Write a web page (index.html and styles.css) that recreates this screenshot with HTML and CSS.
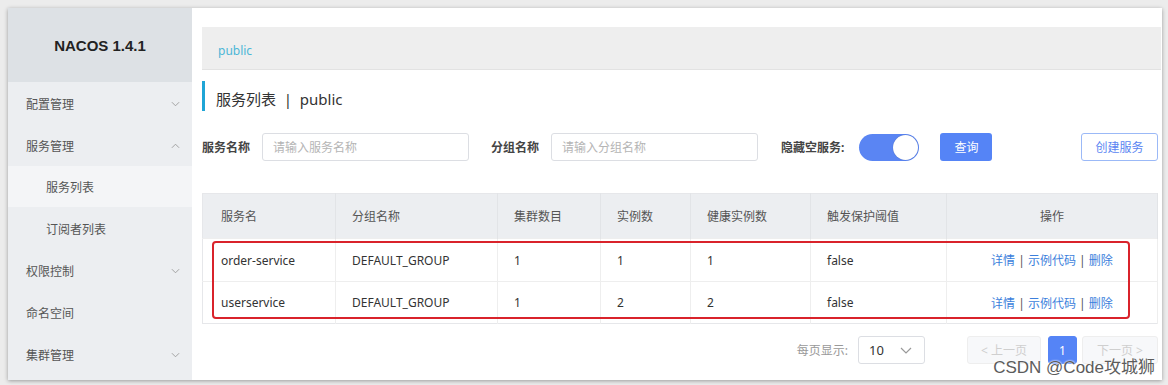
FILE: index.html
```html
<!DOCTYPE html>
<html lang="zh">
<head>
<meta charset="utf-8">
<title>NACOS</title>
<link rel="stylesheet" href="styles.css">
</head>
<body>
<div class="app">
  <aside class="sidebar">
    <div class="brand">NACOS 1.4.1</div>
    <ul class="menu">
      <li class="item"><span>配置管理</span><svg class="chev" viewBox="0 0 10 6"><path d="M1 1l4 4 4-4"/></svg></li>
      <li class="item"><span>服务管理</span><svg class="chev" viewBox="0 0 10 6"><path d="M1 5l4-4 4 4"/></svg></li>
      <li class="item sub active"><span>服务列表</span></li>
      <li class="item sub"><span>订阅者列表</span></li>
      <li class="item"><span>权限控制</span><svg class="chev" viewBox="0 0 10 6"><path d="M1 1l4 4 4-4"/></svg></li>
      <li class="item"><span>命名空间</span></li>
      <li class="item"><span>集群管理</span><svg class="chev" viewBox="0 0 10 6"><path d="M1 1l4 4 4-4"/></svg></li>
    </ul>
  </aside>
  <main class="main">
    <div class="crumb">public</div>
    <h1 class="title">服务列表&nbsp;&nbsp;|&nbsp;&nbsp;public</h1>
    <div class="form">
      <label class="lbl">服务名称</label>
      <div class="input">请输入服务名称</div>
      <label class="lbl lbl2">分组名称</label>
      <div class="input">请输入分组名称</div>
      <label class="lbl lbl3">隐藏空服务:</label>
      <div class="toggle"><span class="knob"></span></div>
      <button class="btn primary">查询</button>
      <span class="spacer"></span>
      <button class="btn outline">创建服务</button>
    </div>
    <div class="table-wrap">
      <table class="tbl">
        <colgroup>
          <col class="c1"><col class="c2"><col class="c3"><col class="c4"><col class="c5"><col class="c6"><col class="c7">
        </colgroup>
        <thead>
          <tr><th>服务名</th><th>分组名称</th><th>集群数目</th><th>实例数</th><th>健康实例数</th><th>触发保护阈值</th><th class="center">操作</th></tr>
        </thead>
        <tbody>
          <tr><td>order-service</td><td>DEFAULT_GROUP</td><td>1</td><td>1</td><td>1</td><td>false</td><td class="ops"><a>详情</a> | <a>示例代码</a> | <a>删除</a></td></tr>
          <tr><td>userservice</td><td>DEFAULT_GROUP</td><td>1</td><td>2</td><td>2</td><td>false</td><td class="ops"><a>详情</a> | <a>示例代码</a> | <a>删除</a></td></tr>
        </tbody>
      </table>
      <div class="highlight"></div>
    </div>
    <div class="pager">
      <span class="per">每页显示:</span>
      <div class="select"><span>10</span><svg class="schev" viewBox="0 0 12 7"><path d="M1 1l5 5 5-5"/></svg></div>
      <button class="pbtn disabled prev">&lt; 上一页</button>
      <button class="pbtn current">1</button>
      <button class="pbtn disabled next">下一页 &gt;</button>
    </div>
    <div class="watermark">CSDN @Code攻城狮</div>
  </main>
</div>
</body>
</html>
```
FILE: styles.css
```css
* { box-sizing: border-box; }
html, body { margin: 0; padding: 0; }
body {
  width: 1168px;
  height: 385px;
  background: #ececec;
  font-family: "Noto Sans", "Noto Sans CJK SC", sans-serif;
  font-size: 12px;
  color: #333;
  overflow: hidden;
}
.app {
  display: flex;
  margin: 8px 6px 0 8px;
  height: 372px;
  background: #fff;
  box-shadow: 0 1px 4px rgba(0,0,0,0.35);
}
.sidebar {
  width: 184px;
  flex: none;
  background: #eceef1;
  display: flex;
  flex-direction: column;
}
.brand {
  height: 74px;
  background: #dde1e5;
  display: flex;
  align-items: center;
  justify-content: center;
  font-weight: bold;
  font-size: 15px;
  color: #222;
  font-family: "Liberation Sans", "Noto Sans CJK SC", sans-serif;
}
.menu { list-style: none; margin: 0; padding: 0; }
.item {
  height: 41.8px;
  display: flex;
  align-items: center;
  justify-content: space-between;
  padding: 2px 12px 0 18px;
  color: #555;
  font-size: 12px;
}
.item.sub { padding-left: 38px; }
.item.active { background: #f4f5f7; }
.chev { width: 9px; height: 6px; fill: none; stroke: #9a9a9a; stroke-width: 1; }

.main {
  flex: 1;
  position: relative;
  padding: 19px 5px 0 10px;
  display: flex;
  flex-direction: column;
}
.crumb {
  height: 43px;
  margin-right: -3px;
  background: #eeeeee;
  border-bottom: 1px solid #e2e2e2;
  display: flex;
  align-items: center;
  padding: 4px 0 0 16px;
  color: #4cb6d6;
  font-size: 12px;
}
.title {
  margin: 11px 0 0 0;
  height: 30px;
  border-left: 3px solid #1fa5d6;
  padding: 4px 0 0 11px;
  display: flex;
  align-items: center;
  font-size: 15px;
  font-weight: normal;
  color: #333;
}
.form {
  margin-top: 22px;
  height: 28px;
  display: flex;
  align-items: center;
}
.lbl { font-weight: bold; color: #444; font-size: 12px; margin-right: 12px; }
.lbl2 { margin-left: 22px; }
.lbl3 { margin-left: 23px; margin-right: 15px; }
.input {
  width: 207px;
  height: 28px;
  border: 1px solid #dcdee3;
  border-radius: 3px;
  display: flex;
  align-items: center;
  padding-left: 10px;
  color: #b5b5b5;
  font-size: 12px;
}
.toggle {
  width: 60px;
  height: 27px;
  border-radius: 14px;
  background: #5a85f3;
  position: relative;
  display: flex;
  justify-content: flex-end;
  align-items: center;
  padding-right: 1px;
}
.knob {
  width: 25px;
  height: 25px;
  border-radius: 50%;
  background: #fff;
  box-shadow: 0 0 1px rgba(0,0,0,0.3);
}
.btn {
  font-family: inherit;
  font-size: 12px;
  height: 28px;
  border-radius: 3px;
  cursor: pointer;
}
.primary {
  margin-left: 21px;
  width: 52px;
  border: none;
  background: #5584f6;
  color: #fff;
}
.spacer { flex: 1; }
.outline {
  width: 77px;
  background: #fff;
  border: 1px solid #9bb9f7;
  color: #5a86f2;
}
.table-wrap {
  margin-top: 32px;
  position: relative;
}
.tbl {
  width: 955px;
  table-layout: fixed;
  border-collapse: collapse;
  border: 1px solid #e6e7ea;
}
.c1 { width: 133px; } .c2 { width: 162px; } .c3 { width: 103px; } .c4 { width: 90px; }
.c5 { width: 120px; } .c6 { width: 136px; } .c7 { width: 211px; }
.tbl th {
  height: 45px;
  background: #eceef1;
  font-weight: normal;
  text-align: left;
  padding: 0 0 0 16px;
  color: #555;
  border-right: 1px solid #e2e4e7;
  font-size: 12px;
}
.tbl th:first-child, .tbl td:first-child { padding-left: 18px; }
.tbl th.center { text-align: center; padding: 0; }
.tbl td {
  height: 43px;
  padding: 0 0 0 16px;
  border-right: 1px solid #eeeeee;
  border-top: 1px solid #eeeeee;
  color: #333;
  font-size: 12px;
}
.tbl tbody tr:last-child td { height: 42px; }
.tbl td.ops { text-align: center; padding: 0 0 0 0; color: #555; }
.ops a { color: #3c7fdc; }
.highlight {
  position: absolute;
  left: 10px;
  top: 48px;
  width: 918px;
  height: 78px;
  border: 2px solid #d9232b;
  border-radius: 4px;
}
.pager {
  margin-top: 12px;
  height: 28px;
  display: flex;
  align-items: center;
  justify-content: flex-end;
}
.per { color: #999; margin-right: 10px; }
.select {
  width: 67px;
  height: 28px;
  border: 1px solid #dcdee3;
  border-radius: 3px;
  display: flex;
  align-items: center;
  justify-content: space-between;
  padding: 0 12px 0 10px;
  margin-right: 42px;
  font-size: 13px;
  color: #333;
}
.schev { width: 12px; height: 7px; fill: none; stroke: #999; stroke-width: 1.2; }
.pbtn {
  font-family: inherit;
  height: 28px;
  border: 1px solid #eeeeee;
  border-radius: 3px;
  background: #f7f8fa;
  font-size: 12px;
}
.disabled { color: #cfcfcf; }
.prev { width: 74px; }
.current {
  width: 29px;
  margin: 0 5px 0 7px;
  background: #5584f6;
  border-color: #5584f6;
  color: #fff;
}
.next { width: 76px; }
.watermark {
  position: absolute;
  right: 8px;
  bottom: 2px;
  font-size: 17px;
  color: #5c5c5c;
  text-shadow: 0 0 2px #fff, 0 0 2px #fff;
  font-family: "Liberation Sans", "Noto Sans CJK SC", sans-serif;
}
```
